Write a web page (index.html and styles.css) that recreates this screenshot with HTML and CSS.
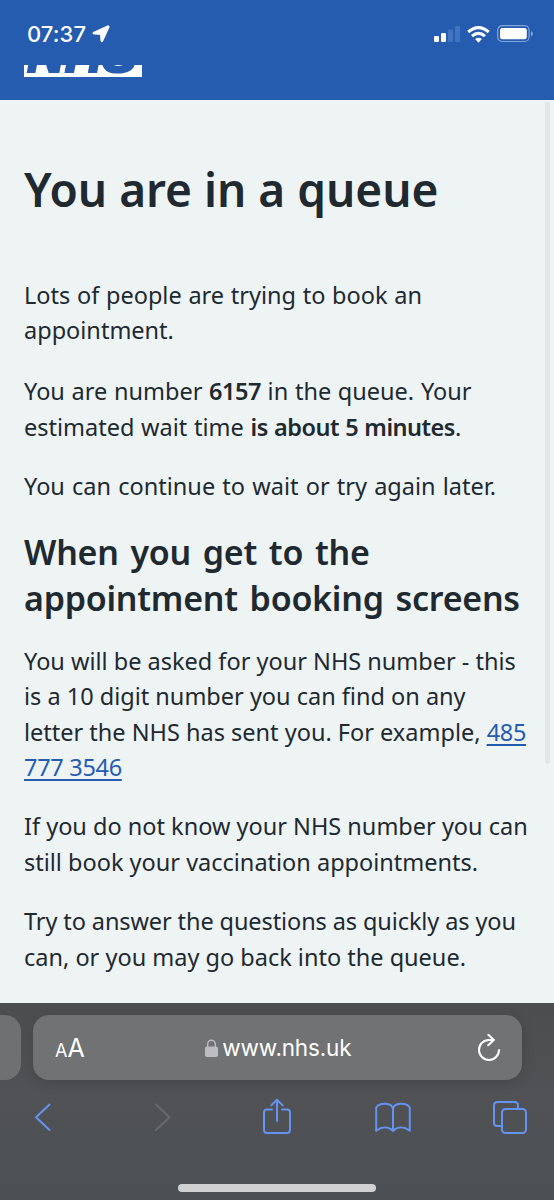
FILE: index.html
```html
<!DOCTYPE html>
<html lang="en">
<head>
    <meta charset="UTF-8">
    <meta name="viewport" content="width=device-width, initial-scale=1.0">
    <title>You are in a queue - NHS</title>
    <link rel="stylesheet" href="styles.css">
</head>
<body>
    <header class="header">
        <div class="status-bar">
            <div class="status-time">
                <span class="clock">07:37</span>
                <svg class="location-icon" viewBox="0 0 18 18">
                    <path d="M15.8 0.8 L1.2 7.4 Q0.2 8.4 1.4 8.9 L8.4 9.4 L9 16.2 Q9.8 17.6 10.7 16.2 L17.2 2 Q17.2 0.4 15.8 0.8Z"/>
                </svg>
            </div>
            <div class="status-icons">
                <svg class="signal-icon" viewBox="0 0 26 16">
                    <rect x="0" y="10" width="5" height="6" rx="1.3"/>
                    <rect x="7" y="7" width="5" height="9" rx="1.3"/>
                    <rect class="dim" x="14" y="3.5" width="5" height="12.5" rx="1.3"/>
                    <rect class="dim" x="21" y="0" width="5" height="16" rx="1.3"/>
                </svg>
                <svg class="wifi-icon" viewBox="0 0 22 16">
                    <path class="arc" d="M1.2 5.6 Q11 -2.6 20.8 5.6"/>
                    <path class="arc" d="M4.8 9.6 Q11 4.2 17.2 9.6"/>
                    <path d="M7.8 12.4 Q11 9.6 14.2 12.4 L11 15.8Z"/>
                </svg>
                <svg class="battery-icon" viewBox="0 0 37 18">
                    <rect class="shell" x="0.7" y="0.7" width="31.4" height="15.8" rx="4.5"/>
                    <rect x="3" y="3" width="26.8" height="11.2" rx="2.5"/>
                    <path class="tip" d="M34 6 Q36 7 36 8.8 Q36 10.6 34 11.6Z"/>
                </svg>
            </div>
        </div>
        <div class="logo-window">
            <div class="logo"><span>NHS</span></div>
        </div>
    </header>

    <main class="content">
        <h1>You are in a queue</h1>
        <p class="intro">Lots of people are trying to book an<br>appointment.</p>
        <p class="position">You are number <strong>6157</strong> in the queue. Your<br>estimated wait time <strong>is about 5 minutes</strong>.</p>
        <p class="options">You can continue to wait or try again later.</p>
        <h2>When you get to the<br>appointment booking screens</h2>
        <p>You will be asked for your NHS number - this<br>is a 10 digit number you can find on any<br>letter the NHS has sent you. For example, <a href="#">485<br>777 3546</a></p>
        <p>If you do not know your NHS number you can<br>still book your vaccination appointments.</p>
        <p><span class="tight">Try to answer the questions as quickly as you</span><br>can, or you may go back into the queue.</p>
        <div class="scrollbar"></div>
    </main>

    <footer class="browser-bar">
        <div class="tabs">
            <div class="previous-tab"></div>
            <div class="address">
                <span class="text-size"><small>A</small>A</span>
                <span class="site">
                    <svg class="lock-icon" viewBox="0 0 13 18">
                        <rect x="0" y="7.5" width="13" height="10.5" rx="1.8"/>
                        <path d="M2.7 8 V5 A3.8 3.8 0 0 1 10.3 5 V8"/>
                    </svg>
                    <span class="site-name">www.nhs.uk</span>
                </span>
                <svg class="reload-icon" viewBox="0 0 24 28">
                    <path d="M16.8 5.9 H12 A10 10 0 1 0 22 15.9 M11.4 0.8 L16.8 5.9 L11.2 11.2"/>
                </svg>
            </div>
        </div>
        <nav class="toolbar">
            <svg viewBox="0 0 36 40"><path d="M24.5 7.5 L11 20.3 L24.5 33"/></svg>
            <svg class="disabled" viewBox="0 0 36 40"><path d="M14 7.5 L27.5 20.3 L14 33"/></svg>
            <svg viewBox="0 0 36 40"><path d="M13 12.5 H8 Q5 12.5 5 15.5 V33 Q5 36 8 36 H28 Q31 36 31 33 V15.5 Q31 12.5 28 12.5 H23 M18 24 V2.8 M12.3 8.4 L18 2.8 L23.7 8.4"/></svg>
            <svg viewBox="0 0 36 40"><path d="M18 12 C17 5.5 5 5.2 1.2 10.5 V33.8 C7 29.5 13.5 29.5 18 34 C22.5 29.5 29 29.5 34.8 33.8 V10.5 C31 5.2 19 5.5 18 12 V34"/></svg>
            <svg viewBox="0 0 36 40"><path d="M10 29 H5.5 Q2 29 2 25.5 V8.5 Q2 5 5.5 5 H22.5 Q26 5 26 8.5 V12"/><rect x="10" y="12" width="24" height="24" rx="3.5"/></svg>
        </nav>
        <div class="home-indicator"></div>
    </footer>
</body>
</html>
```

FILE: styles.css
```css
:root {
    --nhs-blue: #255cb0;
    --page: #eef3f4;
    --text: #212930;
    --ios-blue: #6593f2;
}

* {
    margin: 0;
    padding: 0;
    box-sizing: border-box;
}

body {
    width: 554px;
    height: 1200px;
    overflow: hidden;
    display: flex;
    flex-direction: column;
    background-color: var(--page);
    color: var(--text);
    font-family: "Noto Sans", sans-serif;
}

.header {
    height: 100px;
    background-color: var(--nhs-blue);
    color: #fff;
}

.status-bar {
    height: 65px;
    padding: 3px 20px 0 27px;
    display: flex;
    justify-content: space-between;
    align-items: center;
}

.status-time,
.status-icons {
    display: flex;
    align-items: center;
}

.status-time {
    gap: 6px;
}

.status-icons {
    gap: 7px;
}

.status-bar svg {
    fill: #fff;
}

.clock {
    font: 500 22px/26px Inter, sans-serif;
    letter-spacing: 0.1px;
}

.status-bar .location-icon {
    width: 18px;
    height: 18px;
    stroke: #fff;
    stroke-width: 0.8;
}

.signal-icon {
    width: 26px;
    height: 16px;
}

.status-bar .dim {
    fill: #4275c0;
}

.wifi-icon {
    width: 23px;
    height: 17px;
}

.wifi-icon .arc {
    fill: none;
    stroke: #fff;
    stroke-width: 3;
}

.battery-icon {
    width: 37px;
    height: 18px;
}

.battery-icon .shell {
    fill: none;
    stroke: #7fa5dc;
    stroke-width: 1.2;
}

.status-bar .tip {
    fill: #7fa5dc;
}

/* the logo is scrolled part way under the status bar */
.logo-window {
    height: 12px;
    margin-left: 24px;
    width: 118px;
    overflow: hidden;
    display: flex;
    align-items: flex-end;
}

.logo {
    flex: none;
    width: 118px;
    height: 48px;
    background-color: #fff;
    color: var(--nhs-blue);
    font: italic bold 52px/50px "Liberation Sans", sans-serif;
    text-indent: -2px;
    text-align: center;
    -webkit-text-stroke: 2px var(--nhs-blue);
}

.content {
    position: relative;
    height: 903px;
    padding: 60px 0 0 24px;
    white-space: nowrap;
}

h1 {
    margin-bottom: 59.5px;
    font-size: 46px;
    line-height: 58px;
    font-weight: 600;
}

h2 {
    margin-bottom: 23px;
    font-size: 34px;
    line-height: 46px;
    font-weight: 600;
    letter-spacing: -0.25px;
    word-spacing: 3.2px;
}

p {
    margin-bottom: 24px;
    font-size: 23.5px;
    line-height: 35.4px;
}

.intro {
    margin-bottom: 24.6px;
    word-spacing: 0.6px;
}

.position {
    line-height: 36.2px;
    word-spacing: 0.6px;
}

.options {
    word-spacing: 1.1px;
}

.tight {
    letter-spacing: -0.1px;
}

strong {
    font-weight: 600;
    letter-spacing: -0.5px;
}

a {
    color: var(--nhs-blue);
    letter-spacing: -0.3px;
    text-underline-offset: 3px;
    text-decoration-thickness: 1.5px;
}

.scrollbar {
    position: absolute;
    top: 2px;
    right: 4px;
    width: 5px;
    height: 662px;
    border-radius: 3px;
    background-color: #e3e6e8;
}

.browser-bar {
    height: 197px;
    background: linear-gradient(#4c4d4e, #505255 50%, #4c5055);
}

.tabs {
    display: flex;
    gap: 12px;
    padding-top: 12px;
}

.previous-tab {
    width: 21px;
    height: 65px;
    border-radius: 0 16px 16px 0;
    background-color: #6f7072;
}

.address {
    width: 489px;
    height: 65px;
    padding: 0 21px 0 22px;
    border-radius: 16px;
    display: flex;
    justify-content: space-between;
    align-items: center;
    background-color: #717274;
    color: #fff;
    font-family: Inter, sans-serif;
    box-shadow: 0 3px 14px rgba(0, 0, 0, 0.12);
}

.text-size {
    font-size: 25px;
}

.text-size small {
    font-size: 18px;
}

.site {
    display: flex;
    align-items: center;
    gap: 4px;
    margin-right: 5px;
}

.site-name {
    font-size: 22.5px;
    letter-spacing: -0.15px;
}

.lock-icon {
    width: 13px;
    height: 18px;
    fill: #bcbcc2;
}

.lock-icon path {
    fill: none;
    stroke: #bcbcc2;
    stroke-width: 1.4;
}

.reload-icon {
    width: 24px;
    height: 28px;
    fill: none;
    stroke: #fff;
    stroke-width: 2;
    stroke-linecap: round;
}

.toolbar {
    display: flex;
    justify-content: space-between;
    padding: 17px 26px 0 25px;
}

.toolbar svg {
    width: 36px;
    height: 40px;
    fill: none;
    stroke: var(--ios-blue);
    stroke-width: 2;
    stroke-linecap: round;
    stroke-linejoin: round;
}

.toolbar .disabled {
    stroke: #68696c;
}

.home-indicator {
    width: 198px;
    height: 8px;
    margin: 47px auto 0;
    border-radius: 4px;
    background-color: #d1d1d3;
}
```
